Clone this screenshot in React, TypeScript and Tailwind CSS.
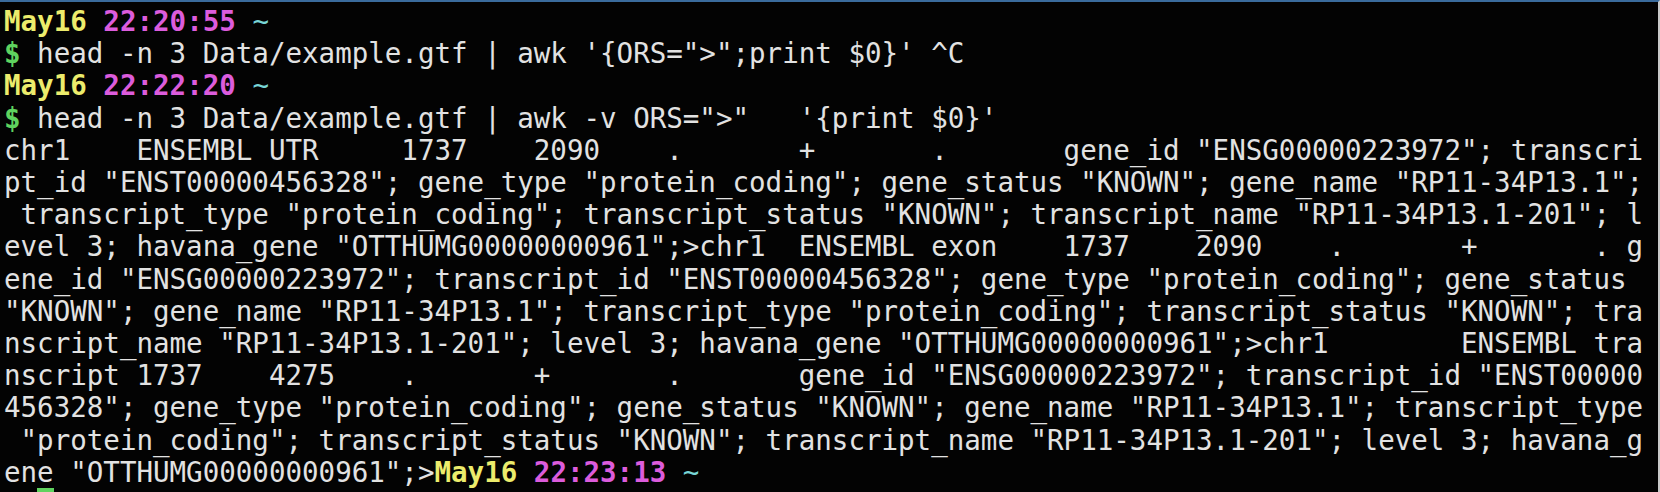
const Prompt = ({ time }: { time: string }) => (
  <>
    <span className="font-bold text-[#ecec6c]">May16</span>{" "}
    <span className="font-bold text-[#dc5cdc]">{time}</span>{" "}
    <span className="text-[#78d6d6]">~</span>
  </>
);

const Dollar = () => <span className="font-bold text-[#5fd35f]">$</span>;

const outputRows = [
  'chr1    ENSEMBL UTR     1737    2090    .       +       .       gene_id "ENSG00000223972"; transcri',
  'pt_id "ENST00000456328"; gene_type "protein_coding"; gene_status "KNOWN"; gene_name "RP11-34P13.1";',
  ' transcript_type "protein_coding"; transcript_status "KNOWN"; transcript_name "RP11-34P13.1-201"; l',
  'evel 3; havana_gene "OTTHUMG00000000961";>chr1  ENSEMBL exon    1737    2090    .       +       . g',
  'ene_id "ENSG00000223972"; transcript_id "ENST00000456328"; gene_type "protein_coding"; gene_status ',
  '"KNOWN"; gene_name "RP11-34P13.1"; transcript_type "protein_coding"; transcript_status "KNOWN"; tra',
  'nscript_name "RP11-34P13.1-201"; level 3; havana_gene "OTTHUMG00000000961";>chr1        ENSEMBL tra',
  'nscript 1737    4275    .       +       .       gene_id "ENSG00000223972"; transcript_id "ENST00000',
  '456328"; gene_type "protein_coding"; gene_status "KNOWN"; gene_name "RP11-34P13.1"; transcript_type',
  ' "protein_coding"; transcript_status "KNOWN"; transcript_name "RP11-34P13.1-201"; level 3; havana_g',
];

export default function App() {
  return (
    <div className="w-[1660px] h-[492px] overflow-hidden bg-[#030303] border-t-2 border-t-[#3a6b9c] border-r-2 border-r-[#c8c8c8]">
      <div
        className="pl-[4px] pt-[3px] text-[27.5px] leading-[32.2px] text-[#e2e2e2] whitespace-pre"
        style={{ fontFamily: '"DejaVu Sans Mono", "Liberation Mono", monospace' }}
      >
        <div>
          <Prompt time="22:20:55" />
        </div>
        <div>
          <Dollar />
          {" head -n 3 Data/example.gtf | awk '{ORS=\">\";print $0}' ^C"}
        </div>
        <div>
          <Prompt time="22:22:20" />
        </div>
        <div>
          <Dollar />
          {" head -n 3 Data/example.gtf | awk -v ORS=\">\"   '{print $0}'"}
        </div>
        {outputRows.map((row, i) => (
          <div key={i}>{row}</div>
        ))}
        <div>
          {'ene "OTTHUMG00000000961";>'}
          <Prompt time="22:23:13" />
        </div>
        {/* prompt row below: only the cursor's top edge shows */}
        <div className="flex h-[32px] pl-[33px]">
          <span className="w-[16.5px] h-[32px] bg-[#5fd35f]" />
        </div>
      </div>
    </div>
  );
}
